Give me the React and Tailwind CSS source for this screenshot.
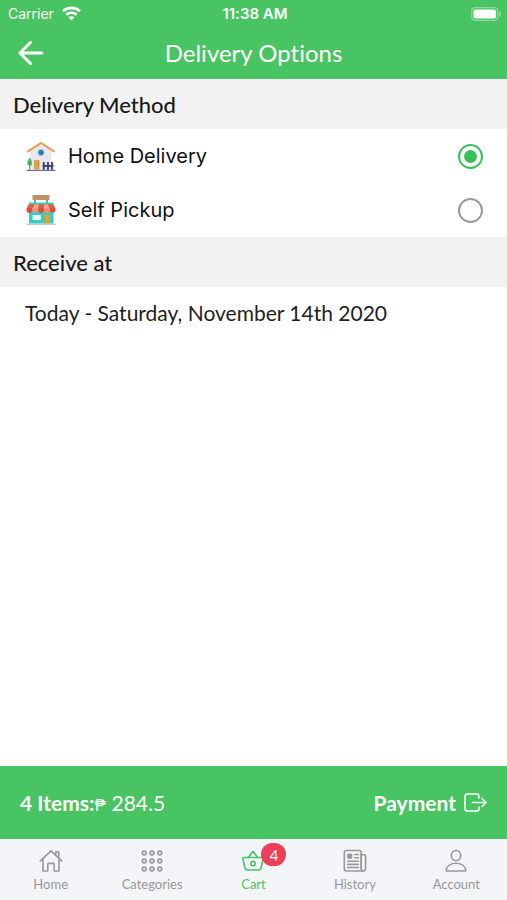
import React, { useState } from "react";

const WifiIcon = () => (
  <svg width="19" height="15" viewBox="0 0 19 15" fill="none" stroke="white" strokeWidth="2.6" aria-hidden="true">
    <path d="M1 5.200C5.800.7 13.200.7 18 5.200" />
    <path d="M4.200 8.800c3-2.700 7.600-2.700 10.600 0" />
    <path d="M9.500 14.500 6.400 11.300c1.800-1.500 4.400-1.500 6.200 0z" fill="white" stroke="none" />
  </svg>
);

const BatteryIcon = () => (
  <svg width="31" height="14" viewBox="0 0 31 14" aria-hidden="true">
    <rect x="0.700" y="0.700" width="26" height="12.600" rx="3.500" fill="none" stroke="white" strokeOpacity="0.400" strokeWidth="1.200" />
    <rect x="2.500" y="2.500" width="22.400" height="9" rx="1.800" fill="white" />
    <path d="M28.200 4.600c2.400.8 2.400 4 0 4.800z" fill="white" fillOpacity="0.450" />
  </svg>
);

const BackIcon = () => (
  <svg width="26" height="24" viewBox="0 0 26 24" fill="none" stroke="white" strokeWidth="3" strokeLinecap="round" strokeLinejoin="round" aria-hidden="true">
    <path d="M12.500 1.500 2 12l10.500 10.500M2.500 12H24" />
  </svg>
);

const HouseIcon = () => (
  <svg width="30" height="32" viewBox="0 0 30 32" aria-hidden="true">
    <path d="M4 10 15 3l10.500 7v19H4z" fill="#e8e8ec" />
    <path d="M1.200 11.800 15 3l13.800 8.800" fill="none" stroke="#e8a04c" strokeWidth="2" />
    <circle cx="15" cy="12.500" r="3" fill="#2779ad" stroke="#8fc3e3" strokeWidth="0.800" />
    <rect x="8" y="20" width="5.500" height="9.500" fill="#dda052" />
    <circle cx="12.300" cy="24.500" r="0.600" fill="#7c5a3a" />
    <path d="M3.700 17.500c2 2 2.800 5 2.300 7-.4 1.600-4.200 1.600-4.600 0-.5-2 .3-5 2.300-7z" fill="#55bd78" />
    <path d="M3.700 21v9" stroke="#5b8065" strokeWidth="0.900" />
    <path d="M17.800 22V30M22 22V30M26 22V30M16.500 26H27.500" stroke="#43426f" strokeWidth="1.900" />
    <path d="M.5 30.400h29" stroke="#73728b" strokeWidth="1.300" />
  </svg>
);

const StoreIcon = () => (
  <svg width="30" height="32" viewBox="0 0 30 32" aria-hidden="true">
    <path d="M9 5.500V10.500M21 5.500V10.500" stroke="#8b7358" strokeWidth="1.500" />
    <rect x="6.500" y="1" width="17" height="5" rx="0.500" fill="#bd9067" />
    <path d="M3 8.500h24.500v21H3z" fill="#31cfc2" />
    <path d="M2.500 10.500h25L29.500 15H.5z" fill="#e9573f" />
    <path d="M8.300 10.500h4.400L12.200 15H6.300zM17.500 10.500h4.400L23.900 15h-5.900z" fill="#f8a694" />
    <path d="M.5 14.500h5.800v1.500a2.900 2.900 0 0 1-5.800 0zM12.200 14.500H18v1.500a2.900 2.900 0 0 1-5.800 0zM23.900 14.500h5.600v1.500a2.800 2.800 0 0 1-5.600 0z" fill="#e04d36" />
    <path d="M6.300 14.500h5.900v1.500a2.900 2.900 0 0 1-5.900 0zM18 14.500h5.900v1.500a2.900 2.900 0 0 1-5.900 0z" fill="#f58a76" />
    <rect x="6.500" y="21" width="8.500" height="5" fill="#e9fbf8" />
    <rect x="18.500" y="20.500" width="5.500" height="9" fill="#f39c21" />
    <path d="M.5 30.200h29" stroke="#b8bec4" strokeWidth="1.300" />
  </svg>
);

const ExitIcon = () => (
  <svg width="23" height="20" viewBox="0 0 23 20" fill="none" stroke="white" strokeWidth="1.600" strokeLinecap="round" strokeLinejoin="round" aria-hidden="true">
    <path d="M15 5V3.600A2.600 2.600 0 0 0 12.400 1H3.600A2.600 2.600 0 0 0 1 3.600v11.800A2.600 2.600 0 0 0 3.600 18h8.800a2.600 2.600 0 0 0 2.600-2.600V14" />
    <path d="M8.500 9.500h13M18 5.500l4 4-4 4" />
  </svg>
);

const iconProps = {
  width: 24,
  height: 24,
  viewBox: "0 0 24 24",
  fill: "none",
  stroke: "currentColor",
  strokeWidth: 1.6,
  strokeLinecap: "round",
  strokeLinejoin: "round",
  "aria-hidden": true,
};

const HomeIcon = () => (
  <svg {...iconProps}>
    <path d="M1.200 12.200 12 1.800l10.800 10.400" />
    <path d="M16.800 6V2.800h3v6" />
    <path d="M4 10v12h4.800v-6.600c0-.6.4-1 1-1h4.400c.6 0 1 .4 1 1V22H20V10" />
  </svg>
);

const GridIcon = () => (
  <svg {...iconProps}>
    {[4, 12, 20].map((y) =>
      [4.2, 12, 19.8].map((x) => <circle key={x + "-" + y} cx={x} cy={y} r="1.900" strokeWidth="1.700" />)
    )}
  </svg>
);

const BasketIcon = () => (
  <svg {...iconProps}>
    <path d="M2.800 8.500h18.400c.7 0 1.200.6 1 1.300l-2.200 9.500c-.3 1-1 1.700-2 1.700H6c-1 0-1.700-.7-2-1.700L1.800 9.800c-.2-.7.3-1.300 1-1.300z" />
    <path d="m7.500 8.300 4.500-6 4.500 6" />
    <circle cx="12" cy="14.600" r="2.200" />
  </svg>
);

const NewsIcon = () => (
  <svg {...iconProps}>
    <path d="M18.200 20V3.200a1.700 1.700 0 0 0-1.700-1.700H3A1.700 1.700 0 0 0 1.300 3.200v16.600c0 1.300 1 2.200 2.200 2.200h17" />
    <path d="M18.200 5.800h3c.8 0 1.400.6 1.400 1.400v12.600a2.200 2.200 0 0 1-4.400 0z" />
    <rect x="5" y="5.500" width="3.500" height="3.500" fill="currentColor" />
    <path d="M11.500 5.500h3.800M11.500 8.800h3.800M4.700 12.300h10.600M4.700 15.400h10.600M4.700 18.500h10.600" />
  </svg>
);

const PersonIcon = () => (
  <svg {...iconProps}>
    <ellipse cx="12" cy="6.600" rx="4.700" ry="5.100" />
    <path d="M12 14.300c-4.400 0-8.700 2.200-9.800 6.200-.2.700.2 1.500 1 1.500h17.600c.8 0 1.200-.8 1-1.500-1.100-4-5.400-6.200-9.800-6.200z" />
  </svg>
);

const methods = [
  { id: "home", label: "Home Delivery", Icon: HouseIcon },
  { id: "pickup", label: "Self Pickup", Icon: StoreIcon },
];

const tabs = [
  { label: "Home", Icon: HomeIcon },
  { label: "Categories", Icon: GridIcon },
  { label: "Cart", Icon: BasketIcon, badge: 4 },
  { label: "History", Icon: NewsIcon },
  { label: "Account", Icon: PersonIcon },
];

const SectionTitle = ({ children }) => (
  <h2 className="flex h-[50px] items-center bg-[#f2f2f2] px-[13px] text-[22px] font-medium text-[#1a1a1a]">
    {children}
  </h2>
);

export default function App() {
  const [method, setMethod] = useState("home");

  return (
    <div className="flex min-h-screen flex-col bg-white font-['Lato',sans-serif] [font-variant-ligatures:none]">
      <header className="bg-[#48c462] text-white">
        {/* Status bar */}
        <div className="grid h-[27px] grid-cols-[1fr_auto_1fr] items-center pr-[5px] pl-2 font-['Inter',sans-serif] text-sm">
          <div className="flex items-center gap-2">
            <span>Carrier</span>
            <WifiIcon />
          </div>
          <div className="text-center text-[15px] font-semibold">11:38 AM</div>
          <div className="flex justify-end">
            <BatteryIcon />
          </div>
        </div>

        {/* Title bar */}
        <div className="grid h-[52px] grid-cols-[1fr_auto_1fr] items-center px-[18px]">
          <button type="button" aria-label="Back" className="justify-self-start">
            <BackIcon />
          </button>
          <h1 className="text-2xl">Delivery Options</h1>
        </div>
      </header>

      <main className="flex-1">
        <SectionTitle>Delivery Method</SectionTitle>
        <div>
          {methods.map(({ id, label, Icon }) => (
            <label
              key={id}
              className="flex h-[54px] items-center gap-3 pr-6 pl-[26px] font-['Inter',sans-serif] text-xl text-[#111]"
            >
              <Icon />
              <span className="flex-1">{label}</span>
              <input
                type="radio"
                name="method"
                value={id}
                checked={method === id}
                onChange={() => setMethod(id)}
                className="flex size-[25px] appearance-none items-center justify-center rounded-full border-2 border-[#999] checked:border-[#3bbf58] checked:before:size-[13px] checked:before:rounded-full checked:before:bg-[#3bbf58] checked:before:content-['']"
              />
            </label>
          ))}
        </div>

        <SectionTitle>Receive at</SectionTitle>
        <p className="px-[25px] py-3 text-[21px] leading-7 text-[#222]">Today - Saturday, November 14th 2020</p>
      </main>

      {/* Order total */}
      <div className="flex h-[73px] items-center justify-between bg-[#48c462] px-5 text-[21px] text-white">
        <div>
          <span className="font-bold">4 Items:</span>
          <span className="font-['Roboto',sans-serif] text-base">₱</span> 284.5
        </div>
        <button type="button" className="flex items-center gap-2 font-bold">
          Payment
          <ExitIcon />
        </button>
      </div>

      {/* Tabs */}
      <nav className="grid h-[61px] grid-cols-5 bg-[#f4f5f9] text-[13px]">
        {tabs.map(({ label, Icon, badge }) => (
          <a
            key={label}
            href="#"
            aria-current={badge ? "page" : undefined}
            className={`flex flex-col items-center gap-[3px] pt-[10px] leading-4 ${badge ? "text-[#48c462]" : "text-[#999]"}`}
          >
            <span className="relative">
              <Icon />
              {badge && (
                <span className="absolute -top-[6px] left-5 flex h-[23px] w-[25px] items-center justify-center rounded-full bg-[#ee3f58] text-[15px] text-white">
                  {badge}
                </span>
              )}
            </span>
            {label}
          </a>
        ))}
      </nav>
    </div>
  );
}
